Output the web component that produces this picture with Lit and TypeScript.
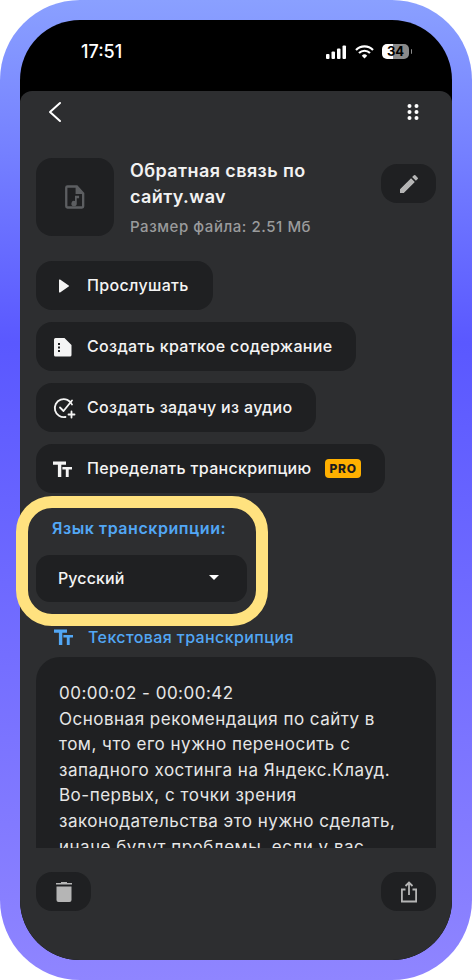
import { LitElement, html, css, svg } from "lit";
import { customElement } from "lit/decorators.js";

const font = css`"Inter", "Noto Sans", sans-serif`;

const ttIcon = svg`<path d="M0 4.600h13v3.200H8.300V20H4.900V7.800H0z"/><path d="M9.400 10H19v2.500h-3.300V20h-2.900v-7.500H9.400z"/>`;

const actions = [
  {
    label: "Прослушать",
    icon: svg`<path d="M6 6.200v11.600a.7.700 0 0 0 1.100.6L15.700 12.600a.7.700 0 0 0 0-1.200L7.100 5.600A.7.700 0 0 0 6 6.200z"/>`,
  },
  {
    label: "Создать краткое содержание",
    icon: svg`<path fill-rule="evenodd" transform="translate(-2.500 0)" d="M5 3h9l7 7v10a1.500 1.500 0 0 1-1.500 1.500H5A1.500 1.500 0 0 1 3.500 20V4.500A1.500 1.500 0 0 1 5 3zM7.500 8v2h2V8zm0 3.500v2h2v-2zm0 3.500v2h2v-2z"/>`,
  },
  {
    label: "Создать задачу из аудио",
    icon: svg`<g transform="translate(-0.500 0)" fill="none" stroke="currentColor" stroke-width="1.800" stroke-linecap="round" stroke-linejoin="round"><path d="M19.500 8.500A9 9 0 1 0 13 21"/><path d="M7.500 11.500l3.500 3.500L19.500 4.500"/><path d="M19 15.500v6M16 18.500h6"/></g>`,
  },
  { label: "Переделать транскрипцию", icon: ttIcon, pro: true },
];

const textLines = [
  "00:00:02 - 00:00:42",
  "Основная рекомендация по сайту в",
  "том, что его нужно переносить с",
  "западного хостинга на Яндекс.Клауд.",
  "Во-первых, с точки зрения",
  "законодательства это нужно сделать,",
  "иначе будут проблемы, если у вас",
];

@customElement("app-root")
export class AppRoot extends LitElement {
  static styles = css`
    :host {
      display: block;
      width: 472px;
      height: 980px;
      font-family: ${font};
      background: #fff;
    }
    * {
      box-sizing: border-box;
    }
    svg {
      display: block;
      flex: none;
    }
    .frame {
      position: relative;
      width: 472px;
      height: 980px;
      padding: 20px;
      border-radius: 80px;
      background: linear-gradient(180deg, #8aa0ff 0%, #5a58ff 35%, #8f85ff 100%);
    }
    .screen {
      display: flex;
      flex-direction: column;
      height: 100%;
      border-radius: 60px;
      overflow: hidden;
      background: #000;
    }
    .status {
      flex: none;
      height: 71px;
      padding: 23px 43px 0 61px;
      display: flex;
      justify-content: space-between;
      color: #fff;
    }
    .clock {
      font-size: 18px;
      line-height: 18px;
      font-weight: 500;
    }
    .status-icons {
      display: flex;
      align-items: center;
      gap: 8px;
      height: 17px;
    }
    .battery {
      position: relative;
      width: 27px;
      height: 15px;
      border-radius: 5px;
      background: linear-gradient(90deg, #fff 40%, #8a8a8a 40%);
      color: #000;
      font-size: 13px;
      line-height: 15px;
      font-weight: 700;
      text-align: center;
    }
    .battery::after {
      content: "";
      position: absolute;
      right: -3px;
      top: 5px;
      width: 1.500px;
      height: 5px;
      border-radius: 0 2px 2px 0;
      background: #8a8a8a;
    }
    .panel {
      flex: 1;
      min-height: 0;
      display: flex;
      flex-direction: column;
      padding: 0 16px;
      background: #2d2e30;
      border-radius: 12px 12px 0 0;
    }
    .nav {
      flex: none;
      height: 67px;
      padding: 9px 11px 0 7px;
      display: flex;
      justify-content: space-between;
      color: #fff;
    }
    .file {
      flex: none;
      display: flex;
      height: 78px;
    }
    .thumb {
      flex: none;
      width: 78px;
      height: 78px;
      border-radius: 16px;
      background: #1f2022;
      display: flex;
      align-items: center;
      justify-content: center;
      color: #5c5e61;
    }
    .info {
      flex: 1;
      padding: 0 0 0 16px;
    }
    .title {
      font-size: 18px;
      line-height: 26px;
      font-weight: 600;
      letter-spacing: 0.4px;
      color: #f2f2f2;
    }
    .size {
      margin-top: 7px;
      font-size: 15px;
      line-height: 20px;
      font-weight: 500;
      letter-spacing: 0.55px;
      color: #9a9b9c;
    }
    .square {
      flex: none;
      width: 55px;
      height: 39px;
      border-radius: 16px;
      background: #1f2022;
      display: flex;
      align-items: center;
      justify-content: center;
      color: #b5b5b5;
    }
    .edit {
      margin-top: 6px;
    }
    .actions {
      flex: none;
      margin-top: 25px;
      display: flex;
      flex-direction: column;
      align-items: flex-start;
      gap: 12px;
    }
    .action {
      height: 49px;
      padding: 0 24px 0 17px;
      display: flex;
      align-items: center;
      gap: 10px;
      border-radius: 16px;
      background: #1f2022;
      color: #f4f4f4;
      font-size: 16px;
      font-weight: 500;
      letter-spacing: 0.33px;
    }
    .action-label {
      margin-bottom: 2px;
    }
    .pro {
      margin-left: 3px;
      padding: 0 4px 0 5px;
      height: 19px;
      border-radius: 4px;
      background: #ffb000;
      color: #1c1c1e;
      font-size: 12px;
      line-height: 19px;
      font-weight: 800;
      letter-spacing: 0.8px;
    }
    .lang-label {
      flex: none;
      margin: 25px 0 0 16px;
      font-size: 16px;
      line-height: 20px;
      font-weight: 600;
      letter-spacing: 0.55px;
      color: #52a7f5;
    }
    .select {
      flex: none;
      margin-top: 17px;
      width: 211px;
      height: 47px;
      padding: 0 28px 2px 22px;
      border-radius: 14px;
      background: #1f2022;
      display: flex;
      align-items: center;
      justify-content: space-between;
      color: #f4f4f4;
      font-size: 16px;
      font-weight: 500;
      letter-spacing: 0.1px;
    }
    .caret {
      width: 0;
      height: 0;
      border-left: 5px solid transparent;
      border-right: 5px solid transparent;
      border-top: 5px solid #fff;
    }
    .text-head {
      flex: none;
      margin: 25px 0 0 18px;
      height: 20px;
      display: flex;
      align-items: center;
      gap: 10px;
      color: #52a7f5;
      font-size: 16px;
      font-weight: 500;
      letter-spacing: 0.4px;
    }
    .text-box {
      flex: none;
      margin-top: 10px;
      height: 191px;
      padding: 24px 23px 0;
      border-radius: 24px 24px 0 0;
      background: #1f2022;
      overflow: hidden;
      color: #e6e6e6;
      font-size: 17px;
      line-height: 25.600px;
      letter-spacing: 0.5px;
      white-space: nowrap;
    }
    .bottom {
      flex: none;
      margin-top: 24px;
      display: flex;
      justify-content: space-between;
    }
    .highlight {
      position: absolute;
      left: 16px;
      top: 496px;
      width: 252px;
      height: 130px;
      border: 12px solid #ffe27f;
      border-radius: 36px;
      pointer-events: none;
    }
  `;

  render() {
    return html`
      <div class="frame">
        <div class="screen">
          <div class="status">
            <span class="clock">17:51</span>
            <div class="status-icons">
              <svg width="21" height="14" viewBox="0 0 21 14" fill="#fff">
                <rect x="0" y="9" width="3.500" height="5" rx="1" />
                <rect x="5.500" y="6.500" width="3.500" height="7.500" rx="1" />
                <rect x="11" y="3.500" width="3.500" height="10.500" rx="1" />
                <rect x="16.500" y="0.500" width="3.500" height="13.500" rx="1" />
              </svg>
              <svg width="19" height="14" viewBox="0 0 19 14" fill="none" stroke="#fff" stroke-width="2.200">
                <path d="M1 5a12 12 0 0 1 17 0" />
                <path d="M4 8a7.800 7.800 0 0 1 11 0" />
                <path d="M9.500 13.500L6.800 10.700a3.800 3.800 0 0 1 5.400 0z" fill="#fff" stroke="none" />
              </svg>
              <div class="battery">34</div>
            </div>
          </div>
          <div class="panel">
            <div class="nav">
              <svg width="24" height="24" viewBox="0 0 24 24" fill="none" stroke="#fff" stroke-width="2" stroke-linecap="round" stroke-linejoin="round">
                <path d="M17 3L7 12l10 9" />
              </svg>
              <svg width="24" height="24" viewBox="0 0 24 24" fill="#fff">
                <circle cx="8.500" cy="6" r="2" /><circle cx="15.500" cy="6" r="2" />
                <circle cx="8.500" cy="12" r="2" /><circle cx="15.500" cy="12" r="2" />
                <circle cx="8.500" cy="18" r="2" /><circle cx="15.500" cy="18" r="2" />
              </svg>
            </div>
            <div class="file">
              <div class="thumb">
                <svg width="28" height="28" viewBox="0 0 24 24" fill="currentColor">
                  <path fill-rule="evenodd" d="M5.500 2h8.500l6 6.500V20a2 2 0 0 1-2 2H5.500a2 2 0 0 1-2-2V4a2 2 0 0 1 2-2zm0 2v16h12.500V9.500h-5.500V4z" />
                  <path d="M12 11h3.500v2h-2V17.500a2.300 2.300 0 1 1-1.500-2.100z" />
                </svg>
              </div>
              <div class="info">
                <div class="title">Обратная связь по<br />сайту.wav</div>
                <div class="size">Размер файла: 2.51 Мб</div>
              </div>
              <div class="square edit">
                <svg width="24" height="24" viewBox="0 0 24 24" fill="currentColor">
                  <path d="M3 17.250V21h3.750L17.800 9.940l-3.750-3.750L3 17.250zM20.700 7.040a1 1 0 0 0 0-1.410l-2.340-2.340a1 1 0 0 0-1.410 0l-1.830 1.830 3.750 3.750 1.830-1.830z" />
                </svg>
              </div>
            </div>
            <div class="actions">
              ${actions.map(
                (a) => html`
                  <div class="action">
                    <svg width="24" height="24" viewBox="0 0 24 24" fill="currentColor">${a.icon}</svg>
                    <span class="action-label">${a.label}</span>
                    ${a.pro ? html`<span class="pro">PRO</span>` : ""}
                  </div>
                `
              )}
            </div>
            <div class="lang-label">Язык транскрипции:</div>
            <div class="select"><span>Русский</span><span class="caret"></span></div>
            <div class="text-head">
              <svg width="24" height="24" viewBox="0 0 24 24" fill="currentColor">${ttIcon}</svg>
              <span>Текстовая транскрипция</span>
            </div>
            <div class="text-box">${textLines.map((l) => html`<div>${l}</div>`)}</div>
            <div class="bottom">
              <div class="square">
                <svg width="24" height="24" viewBox="0 0 24 24" fill="currentColor">
                  <path d="M9 2h6v1h5V4.500H4V3h5z" />
                  <path d="M4.500 6.500h15V20a2 2 0 0 1-2 2h-11a2 2 0 0 1-2-2z" />
                </svg>
              </div>
              <div class="square">
                <svg width="24" height="24" viewBox="0 0 24 24" fill="none" stroke="currentColor" stroke-width="1.800">
                  <path d="M12 15V3M8.500 6L12 2.500 15.500 6" />
                  <path d="M8.500 9.500H4.900v12h14.200v-12h-3.600" />
                </svg>
              </div>
            </div>
          </div>
        </div>
        <div class="highlight"></div>
      </div>
    `;
  }
}
